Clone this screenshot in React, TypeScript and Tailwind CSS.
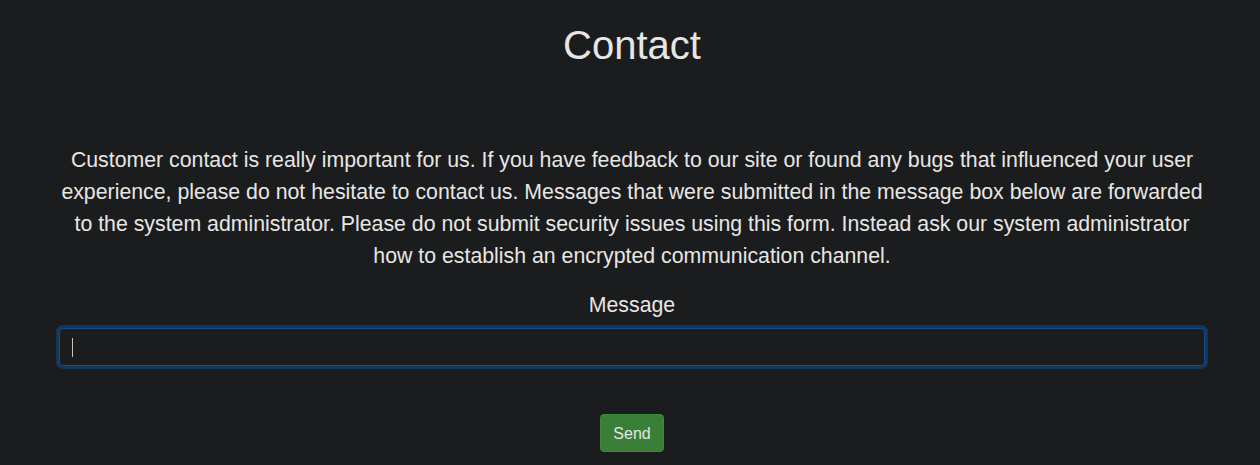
export default function App() {
    return (
        <div className="min-h-screen bg-[#1b1c1e] text-[#e8e6e3] font-['Liberation_Sans',Arial,sans-serif]">
            <div className="ml-[59px] mr-[55px] pt-[21px] text-center">
                <h1 className="text-[40px] leading-[48px] font-normal">Contact</h1>
                <p className="mt-[75px] text-[21.3px] leading-[32px]">
                    Customer contact is really important for us. If you have feedback to our site or found any bugs that
                    influenced your user experience, please do not hesitate to contact us. Messages that were submitted in
                    the message box below are forwarded to the system administrator. Please do not submit security issues
                    using this form. Instead ask our system administrator how to establish an encrypted communication
                    channel.
                </p>
                <label htmlFor="msg" className="block mt-[18px] text-[21.3px] leading-[30px]">
                    Message
                </label>
                <div className="relative mt-2">
                    <input
                        id="msg"
                        type="text"
                        className="block w-full h-[38px] rounded-[4px] border border-[#0d4f91] bg-[#1b1c1e] px-3 text-base text-[#e8e6e3] shadow-[0_0_0_3px_#16365a] outline-none caret-transparent"
                    />
                    {/* blinking caret frozen in place */}
                    <span className="absolute left-[13px] top-[10px] h-[19px] w-px bg-[#c8c3bc]" />
                </div>
                <button className="mt-12 inline-block rounded-[4px] border border-[#3e8a3a] bg-[#3a7f37] px-3 pt-[7px] pb-[5px] text-base leading-6 text-[#e8e6e3]">
                    Send
                </button>
            </div>
        </div>
    );
}
